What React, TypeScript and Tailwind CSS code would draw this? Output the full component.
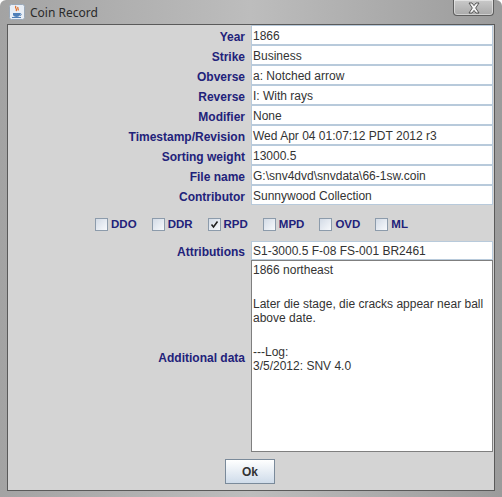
import React from 'react';

const fields: { label: string; value: string }[] = [
  { label: 'Year', value: '1866' },
  { label: 'Strike', value: 'Business' },
  { label: 'Obverse', value: 'a: Notched arrow' },
  { label: 'Reverse', value: 'I: With rays' },
  { label: 'Modifier', value: 'None' },
  { label: 'Timestamp/Revision', value: 'Wed Apr 04 01:07:12 PDT 2012 r3' },
  { label: 'Sorting weight', value: '13000.5' },
  { label: 'File name', value: 'G:\\snv4dvd\\snvdata\\66-1sw.coin' },
  { label: 'Contributor', value: 'Sunnywood Collection' },
];

const flags: { name: string; checked: boolean }[] = [
  { name: 'DDO', checked: false },
  { name: 'DDR', checked: false },
  { name: 'RPD', checked: true },
  { name: 'MPD', checked: false },
  { name: 'OVD', checked: false },
  { name: 'ML', checked: false },
];

// null = empty line
const notes: (string | null)[] = [
  '1866 northeast',
  null,
  'Later die stage, die cracks appear near ball',
  'above date.',
  null,
  '---Log:',
  '3/5/2012: SNV 4.0',
];

const JavaIcon = () => (
  <svg width="16" height="16" viewBox="0 0 16 16">
    <rect x="0.5" y="0.5" width="15" height="15" rx="2" fill="#e8eef6" stroke="#9aa8b8" />
    <path d="M7 2 C5 4 9 5 7 7 M9 3 C8 4.5 10 5 9 6.5" stroke="#e0671c" strokeWidth="1.2" fill="none" />
    <path d="M4 9 h7 v1.5 c0 1.5 -1.5 2.5 -3.5 2.5 s-3.5 -1 -3.5 -2.5 z" fill="#4f7fb8" />
    <path d="M11 9.5 c1.6 0 1.6 2 0 2" stroke="#4f7fb8" strokeWidth="1" fill="none" />
    <path d="M3 13.5 h9" stroke="#4f7fb8" strokeWidth="1" />
  </svg>
);

const CloseGlyph = () => (
  <svg width="14" height="12" viewBox="0 0 14 12">
    <path
      d="M2 1 h3 l2 2.6 l2 -2.6 h3 l-3.3 5 l3.3 5 h-3 l-2 -2.6 l-2 2.6 h-3 l3.3 -5 z"
      fill="#f4f4f4"
      stroke="#4a4a4a"
      strokeWidth="0.9"
      strokeLinejoin="round"
    />
  </svg>
);

const CheckBox = ({ checked }: { checked: boolean }) => (
  <span className="w-[13px] h-[13px] border border-[#8c9bab] bg-gradient-to-br from-[#d3dbe6] to-[#f7f9fc] flex items-center justify-center">
    {checked && (
      <svg width="9" height="9" viewBox="0 0 9 9">
        <path d="M1.5 4.5 L3.5 7 L7.5 1.5" stroke="#222" strokeWidth="1.6" fill="none" />
      </svg>
    )}
  </span>
);

const App: React.FC = () => {
  return (
    <div
      className="w-[502px] h-[497px] bg-gradient-to-r from-[#a3a3a3] via-[#bdbdbd] to-[#9b9b9b] rounded-t-[6px] flex flex-col"
      style={{ fontFamily: '"Liberation Sans", Arial, sans-serif' }}
    >
      {/* title bar */}
      <div className="h-[24px] flex items-center pl-[9px] pr-[8px] relative shrink-0">
        <JavaIcon />
        <span className="ml-[5px] text-[12px] text-[#2a2a2a] mt-[1px]" style={{ fontFamily: '"Noto Sans", "Liberation Sans", sans-serif' }}>
          Coin Record
        </span>
        <div className="ml-auto self-start w-[41px] h-[16px] border border-t-0 border-[#5e5e5e] rounded-b-[4px] bg-gradient-to-b from-[#c9c9c9] to-[#a9a9a9] flex items-center justify-center shadow-[inset_0_0_0_1px_rgba(255,255,255,0.45)]">
          <CloseGlyph />
        </div>
      </div>

      {/* content panel */}
      <div className="mx-[7px] border border-[#5a5a5a] bg-[#d4d4d4] h-[467px] flex flex-col shrink-0">
        <div className="grid grid-cols-[237px_242px] gap-x-[6px]">
          {fields.map((f) => (
            <React.Fragment key={f.label}>
              <div className="h-[20px] flex items-center justify-end pt-[3px] text-[12px] font-bold text-[#22227a]">{f.label}</div>
              <div className="h-[20px] border border-[#b8cadb] bg-white flex items-center pl-[1px] pt-[2px] text-[12px] text-[#333]">
                {f.value}
              </div>
            </React.Fragment>
          ))}
        </div>

        <div className="h-[36px] flex items-center justify-center gap-[15px] pl-[1px] pt-[3px]">
          {flags.map((c) => (
            <div key={c.name} className="flex items-center gap-[3px]">
              <CheckBox checked={c.checked} />
              <span className="text-[11.5px] font-bold text-[#22227a]">{c.name}</span>
            </div>
          ))}
        </div>

        <div className="grid grid-cols-[237px_242px] gap-x-[6px]">
          <div className="h-[19px] flex items-center justify-end pt-[2px] text-[12px] font-bold text-[#22227a]">Attributions</div>
          <div className="h-[19px] border border-[#b8cadb] bg-white flex items-center pl-[1px] pt-[1px] text-[12px] text-[#333]">
            S1-3000.5 F-08 FS-001 BR2461
          </div>

          <div className="h-[192px] flex items-center justify-end text-[12px] font-bold text-[#22227a] pt-[3px]">Additional data</div>
          <div className="h-[192px] border border-[#7f7f7f] bg-white pl-[1px] pt-[2px] text-[12px] text-[#333]">
            {notes.map((line, i) =>
              line === null ? (
                <div key={i} className="h-[20px]" />
              ) : (
                <div key={i} className="h-[14px] leading-[14px] whitespace-nowrap">
                  {line}
                </div>
              )
            )}
          </div>
        </div>

        <div className="flex justify-center pt-[7px] pr-[2px]">
          <button className="w-[50px] h-[25px] border border-[#7a8a9a] bg-gradient-to-b from-[#ffffff] to-[#cfdcea] text-[12px] font-bold text-[#333]">
            Ok
          </button>
        </div>
      </div>
    </div>
  );
};

export default App;
